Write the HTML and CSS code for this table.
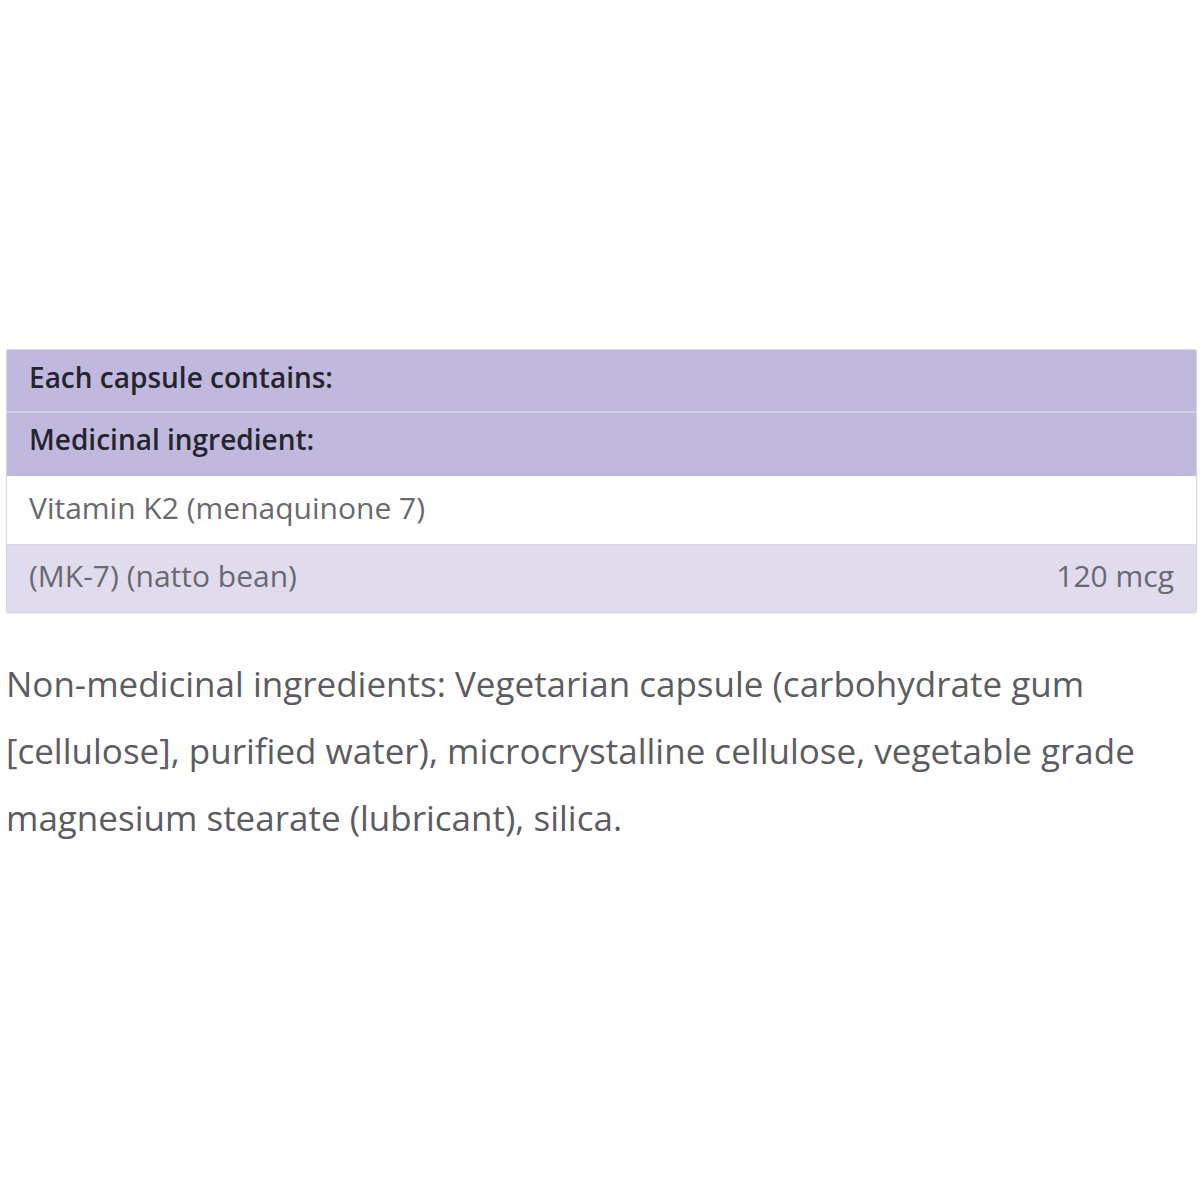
FILE: index.html
```html
<!DOCTYPE html>
<html>
<head>
<meta charset="utf-8">
<link rel="stylesheet" href="styles.css">
</head>
<body>
<div class="page">
  <div class="panel">
    <div class="row head">Each capsule contains:</div>
    <div class="row head second">Medicinal ingredient:</div>
    <div class="row plain">Vitamin K2 (menaquinone 7)</div>
    <div class="row light"><span>(MK-7) (natto bean)</span><span>120 mcg</span></div>
  </div>
  <p class="note">Non-medicinal ingredients: Vegetarian capsule (carbohydrate gum [cellulose], purified water), microcrystalline cellulose, vegetable grade magnesium stearate (lubricant), silica.</p>
</div>
</body>
</html>
```
FILE: styles.css
```css
html, body { margin: 0; padding: 0; background: #fff; }
body { font-family: "Open Sans", Lato, sans-serif; }
.page { padding: 349px 3px 0 6px; }
.panel {
  border: 1px solid #d8d6de;
  border-radius: 2px;
  box-shadow: 0 1px 2px rgba(0,0,0,0.08);
}
.row {
  display: flex;
  justify-content: space-between;
  align-items: center;
  box-sizing: border-box;
  padding: 0 22px 6px;
  font-size: 30px;
  color: #6a6870;
}
.head {
  background: #c0b9dd;
  color: #26242e;
  font-weight: 600;
  font-size: 28px;
  height: 61px;
  padding-bottom: 8px;
}
.head.second { border-top: 2px solid #d4cfe9; height: 65px; padding-bottom: 12px; }
.plain { background: #fff; height: 68px; }
.light { background: #e0dcee; height: 68px; border-top: 1px solid #d9d6e2; }
.note {
  margin: 37px 0 0;
  font-size: 35px;
  line-height: 67px;
  color: #5d5c62;
  max-width: 1150px;
}
```
